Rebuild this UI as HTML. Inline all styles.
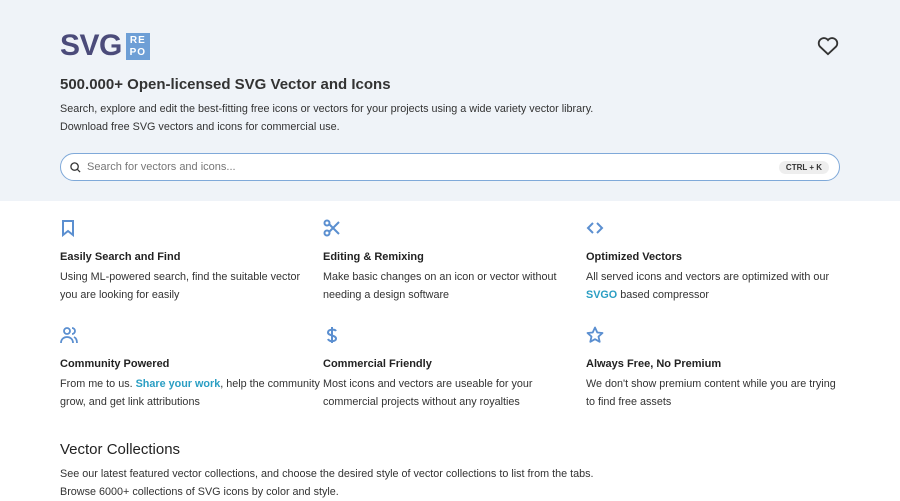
<!DOCTYPE html>
<html><head><style>
*{margin:0;padding:0;box-sizing:border-box}
body{width:900px;height:500px;overflow:hidden;font-family:"Liberation Sans",sans-serif;background:#fff;color:#333}
.hero{background:#eff3f8;height:201px;position:relative}
.logo{position:absolute;left:60px;top:29px;display:flex;align-items:center}
.logo .s{font-size:30px;font-weight:bold;color:#4b4b7a;letter-spacing:-0.5px}
.logo .r{margin-left:4px;width:24px;height:27px;background:#6e9fd6;color:#fff;font-size:10px;font-weight:bold;line-height:12px;text-align:center;padding-top:2px;letter-spacing:1px}
h1{position:absolute;left:60px;top:76px;font-size:15px;font-weight:bold;color:#333}
.d{position:absolute;left:60px;top:100px;font-size:10.8px;line-height:18px;color:#333}
.search{position:absolute;left:60px;top:153px;width:780px;height:28px;border:1px solid #7fa9d9;border-radius:14px;background:#fff}
.search span{position:absolute;left:26px;top:7px;font-size:11px;color:#777}
.kbd{position:absolute;right:10px;top:7px;background:#eee;border-radius:8px;font-size:8px;font-weight:bold;padding:2px 7px;color:#333}
.f{position:absolute;width:258px}
.f svg{display:block;margin-bottom:14px}
.f b{display:block;font-size:11px;margin-bottom:5px;color:#222}
.f p{font-size:10.8px;line-height:18px;color:#333}
.f a{color:#2a9ec3;font-weight:bold;text-decoration:none}
h2{position:absolute;left:60px;top:441px;font-size:15px;font-weight:normal;color:#222}
.c{position:absolute;left:60px;top:465px;font-size:10.8px;line-height:18px}
</style></head><body>
<div class="hero">
<div class="logo"><span class="s">SVG</span><div class="r">RE<br>PO</div></div>
<svg style="position:absolute;left:817px;top:36px" width="22" height="20" viewBox="0 0 24 22"><path d="M12 20 3 11.5A5 5 0 0 1 12 4.5 5 5 0 0 1 21 11.5Z" fill="none" stroke="#333" stroke-width="2"/></svg>
<h1>500.000+ Open-licensed SVG Vector and Icons</h1>
<div class="d">Search, explore and edit the best-fitting free icons or vectors for your projects using a wide variety vector library.<br>Download free SVG vectors and icons for commercial use.</div>
<div class="search"><svg style="position:absolute;left:9px;top:8px" width="11" height="11" viewBox="0 0 12 12"><circle cx="5" cy="5" r="4" fill="none" stroke="#333" stroke-width="1.4"/><path d="M8 8l3 3" stroke="#333" stroke-width="1.4"/></svg><span>Search for vectors and icons...</span><div class="kbd">CTRL + K</div></div>
</div>
<div class="f" style="left:60px;top:219px"><svg width="16" height="18" viewBox="0 0 16 18"><path d="M3 2h10v14l-5-4-5 4z" fill="none" stroke="#5b8fd0" stroke-width="2"/></svg><b>Easily Search and Find</b><p>Using ML-powered search, find the suitable vector you are looking for easily</p></div>
<div class="f" style="left:323px;top:219px"><svg width="18" height="18" viewBox="0 0 18 18" fill="none" stroke="#5b8fd0" stroke-width="2"><circle cx="4" cy="4" r="2.5"/><circle cx="4" cy="14" r="2.5"/><path d="M6 5l10 10M6 13 16 3"/></svg><b>Editing &amp; Remixing</b><p>Make basic changes on an icon or vector without needing a design software</p></div>
<div class="f" style="left:586px;top:219px"><svg width="18" height="18" viewBox="0 0 18 18" fill="none" stroke="#5b8fd0" stroke-width="2"><path d="M7 4 2 9l5 5M11 4l5 5-5 5"/></svg><b>Optimized Vectors</b><p>All served icons and vectors are optimized with our <a>SVGO</a> based compressor</p></div>
<div class="f" style="left:60px;top:326px;width:262px"><svg width="18" height="18" viewBox="0 0 18 18" fill="none" stroke="#5b8fd0" stroke-width="1.8"><circle cx="7" cy="5" r="3"/><path d="M1 17c0-4 3-6 6-6s6 2 6 6M12 2a3 3 0 0 1 0 6M14 11c2 1 3 3 3 6"/></svg><b>Community Powered</b><p>From me to us. <a>Share your work</a>, help the community grow, and get link attributions</p></div>
<div class="f" style="left:323px;top:326px"><svg width="18" height="18" viewBox="0 0 18 18" fill="none" stroke="#5b8fd0" stroke-width="2"><path d="M13 5c-1-2-8-2-8 1.5S13 9 13 12.5 6 16 5 13M9 1v16"/></svg><b>Commercial Friendly</b><p>Most icons and vectors are useable for your commercial projects without any royalties</p></div>
<div class="f" style="left:586px;top:326px"><svg width="18" height="18" viewBox="0 0 18 18" fill="none" stroke="#5b8fd0" stroke-width="1.8"><path d="M9 1.5l2.3 5 5.2.5-4 3.6 1.2 5.2L9 13.2 4.3 15.8l1.2-5.2-4-3.6 5.2-.5z" stroke-linejoin="round"/></svg><b>Always Free, No Premium</b><p>We don't show premium content while you are trying to find free assets</p></div>
<h2>Vector Collections</h2>
<div class="c">See our latest featured vector collections, and choose the desired style of vector collections to list from the tabs.<br>Browse 6000+ collections of SVG icons by color and style.</div>
</body></html>
